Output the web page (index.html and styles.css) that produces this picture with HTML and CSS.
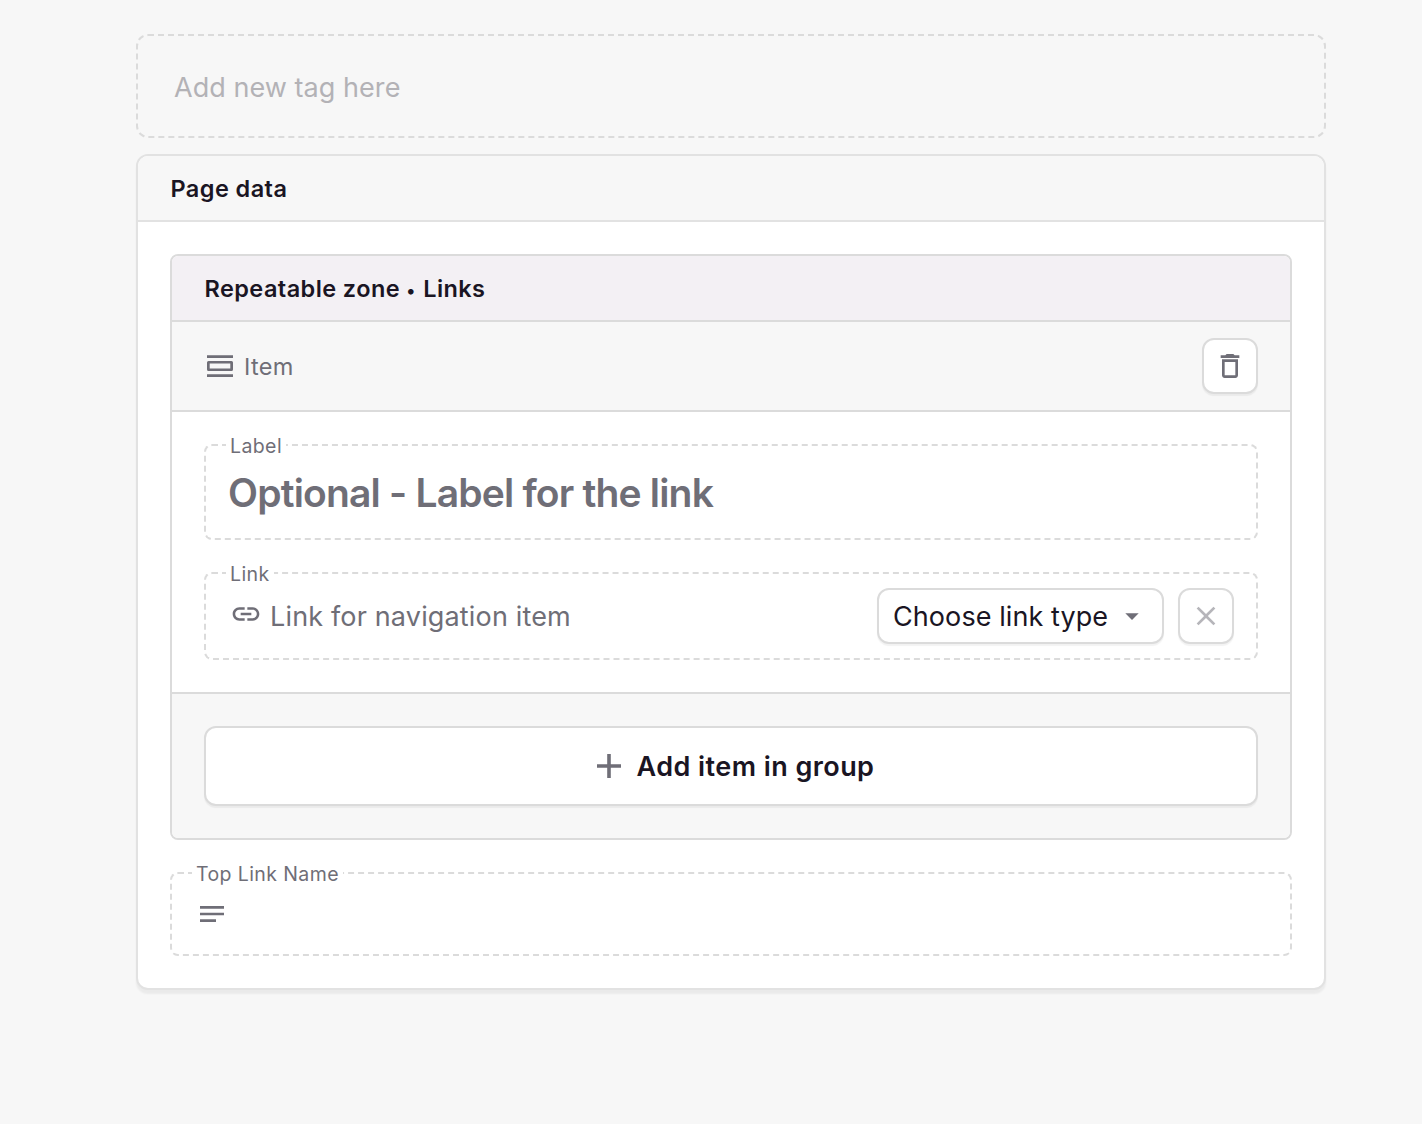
FILE: index.html
```html
<!DOCTYPE html>
<html lang="en">
<head>
<meta charset="utf-8">
<title>Page data</title>
<link rel="stylesheet" href="styles.css">
</head>
<body>
<main class="page">
  <div class="tag-zone"><span class="tag-text">Add new tag here</span></div>
  <section class="card">
    <header class="card-header"><span class="heading">Page data</span></header>
    <div class="card-body">
      <div class="group">
        <header class="group-header"><span class="heading">Repeatable zone <span class="dot">•</span> Links</span></header>
        <div class="item-header">
          <div class="item-name">
            <svg class="icon" viewBox="0 0 32 32"><path d="M3 5.200h26V8H3zM3 24.200h26V27H3z"/><path fill-rule="evenodd" d="M4.500 11h23a1.500 1.500 0 0 1 1.500 1.500v7a1.500 1.500 0 0 1-1.500 1.500h-23A1.500 1.500 0 0 1 3 19.500v-7A1.500 1.500 0 0 1 4.500 11zM5.700 13.600v4.800h20.600v-4.800z"/></svg>
            <span class="item-text">Item</span>
          </div>
          <button class="btn btn-icon" aria-label="Delete"><svg class="icon" viewBox="0 0 24 24"><path d="M6 19c0 1.100.9 2 2 2h8c1.100 0 2-.9 2-2V7H6v12zM8 9h8v10H8V9zm7.500-5l-1-1h-5l-1 1H5v2h14V4z"/></svg></button>
        </div>
        <div class="fields">
          <div class="field field-title">
            <span class="legend">Label</span>
            <span class="title-text">Optional - Label for the link</span>
          </div>
          <div class="field field-link">
            <span class="legend">Link</span>
            <svg class="icon link-icon" viewBox="0 0 24 24"><path d="M3.900 12c0-1.710 1.390-3.100 3.100-3.100h4V7H7c-2.760 0-5 2.240-5 5s2.240 5 5 5h4v-1.900H7c-1.710 0-3.100-1.390-3.100-3.100zM8 13h8v-2H8v2zm9-6h-4v1.900h4c1.710 0 3.100 1.390 3.100 3.100s-1.390 3.100-3.100 3.100h-4V17h4c2.760 0 5-2.240 5-5s-2.240-5-5-5z"/></svg>
            <span class="link-text">Link for navigation item</span>
            <button class="btn btn-select"><span class="select-text">Choose link type</span><svg class="icon" viewBox="0 0 24 24"><path d="M7 10l5 5 5-5z"/></svg></button>
            <button class="btn btn-icon btn-off" aria-label="Clear"><svg class="icon" viewBox="0 0 24 24"><path d="M19 6.410L17.590 5 12 10.590 6.410 5 5 6.410 10.590 12 5 17.590 6.410 19 12 13.410 17.590 19 19 17.590 13.410 12z"/></svg></button>
          </div>
        </div>
        <footer class="group-footer">
          <button class="btn btn-add"><svg class="icon" viewBox="0 0 32 32"><path d="M14.200 4h3.600v10.200H28v3.600H17.800V28h-3.600V17.800H4v-3.600h10.200z"/></svg><span class="add-text">Add item in group</span></button>
        </footer>
      </div>
      <div class="field field-top">
        <span class="legend">Top Link Name</span>
        <svg class="icon" viewBox="0 0 24 24"><path d="M3 18h12v-2H3v2zM3 6v2h18V6H3zm0 7h18v-2H3v2z"/></svg>
      </div>
    </div>
  </section>
</main>
</body>
</html>
```
FILE: styles.css
```css
* { box-sizing: border-box; }

body {
  margin: 0;
  min-height: 100vh;
  padding: 34px 0 0 136px;
  background: #f7f7f7;
  color: #1a1523;
  font-family: Inter, "Liberation Sans", sans-serif;
}

.page {
  display: flex;
  flex-direction: column;
  gap: 16px;
  width: 1190px;
}

.icon { flex: none; width: 32px; height: 32px; fill: #6f6e77; }

.tag-zone {
  display: flex;
  align-items: center;
  height: 104px;
  padding: 2px 36px 0;
  border: 2px dashed #dbdbdb;
  border-radius: 12px;
}
.tag-text { font-size: 27px; letter-spacing: 0.05px; color: #b3b2b6; }

.card {
  height: 836px;
  border: 2px solid #e2e2e2;
  border-radius: 12px;
  background: #fff;
  box-shadow: 0 4px 2px rgba(0, 0, 0, 0.05);
}
.card-header {
  display: flex;
  align-items: center;
  height: 66px;
  padding: 2px 0 0 32.5px;
  border-bottom: 2px solid #e2e2e2;
  border-radius: 10px 10px 0 0;
  background: #f7f7f7;
}
.heading { font-size: 23.5px; font-weight: 600; line-height: 30px; letter-spacing: 0.42px; white-space: nowrap; }
.dot { font-size: 18px; line-height: 1; letter-spacing: 1.4px; }
.card-body { display: flex; flex-direction: column; gap: 32px; padding: 32px; }

.group {
  border: 2px solid #dbdbdb;
  border-radius: 8px;
  overflow: hidden;
}
.group-header {
  display: flex;
  align-items: center;
  height: 66px;
  padding: 2px 0 0 32.5px;
  border-bottom: 2px solid #dbdbdb;
  background: #f3f0f4;
}
.item-header {
  display: flex;
  align-items: center;
  justify-content: space-between;
  height: 90px;
  padding: 0 32px;
  border-bottom: 2px solid #dbdbdb;
  background: #f7f7f7;
}
.item-name { display: flex; align-items: center; gap: 8px; }
.item-text { font-size: 23.5px; letter-spacing: 0.3px; color: #6f6e77; }

.btn {
  display: flex;
  align-items: center;
  justify-content: center;
  height: 56px;
  padding: 0;
  border: 2px solid #dbdbdb;
  border-radius: 12px;
  background: #fff;
  box-shadow: 0 2px 1px rgba(0, 0, 0, 0.05);
  color: #1a1523;
  font: inherit;
}
.btn-icon { flex: none; width: 56px; }
.btn-off .icon { opacity: 0.5; }

.fields { display: flex; flex-direction: column; gap: 32px; padding: 32px; }
.field {
  position: relative;
  display: flex;
  align-items: center;
  border: 2px dashed #dbdbdb;
  border-radius: 8px;
}
.legend {
  position: absolute;
  top: -14px;
  left: 20px;
  padding: 0 4px;
  background: #fff;
  color: #6f6e77;
  font-size: 19.5px;
  letter-spacing: 0.4px;
  line-height: 28px;
  white-space: nowrap;
}
.field-title { height: 96px; padding: 0 22px; }
.title-text { font-size: 39px; font-weight: 600; letter-spacing: -0.81px; color: #6f6e77; white-space: nowrap; }
.field-link { height: 88px; padding: 0 22px 0 24px; }
.link-icon { margin-top: -4px; }
.link-text { flex: 1; margin-left: 8px; font-size: 27px; letter-spacing: 0.16px; color: #6f6e77; white-space: nowrap; }
.btn-select { justify-content: space-between; width: 287px; padding: 0 14px; margin-right: 14px; }
.select-text { font-size: 27px; letter-spacing: 0.08px; white-space: nowrap; }

.group-footer {
  padding: 32px;
  border-top: 2px solid #dbdbdb;
  background: #f7f7f7;
}
.btn-add { gap: 12px; width: 100%; height: 80px; padding-left: 5px; }
.add-text { font-size: 27px; font-weight: 600; letter-spacing: 0.44px; white-space: nowrap; }

.field-top { height: 84px; padding: 0 24px; }
```
